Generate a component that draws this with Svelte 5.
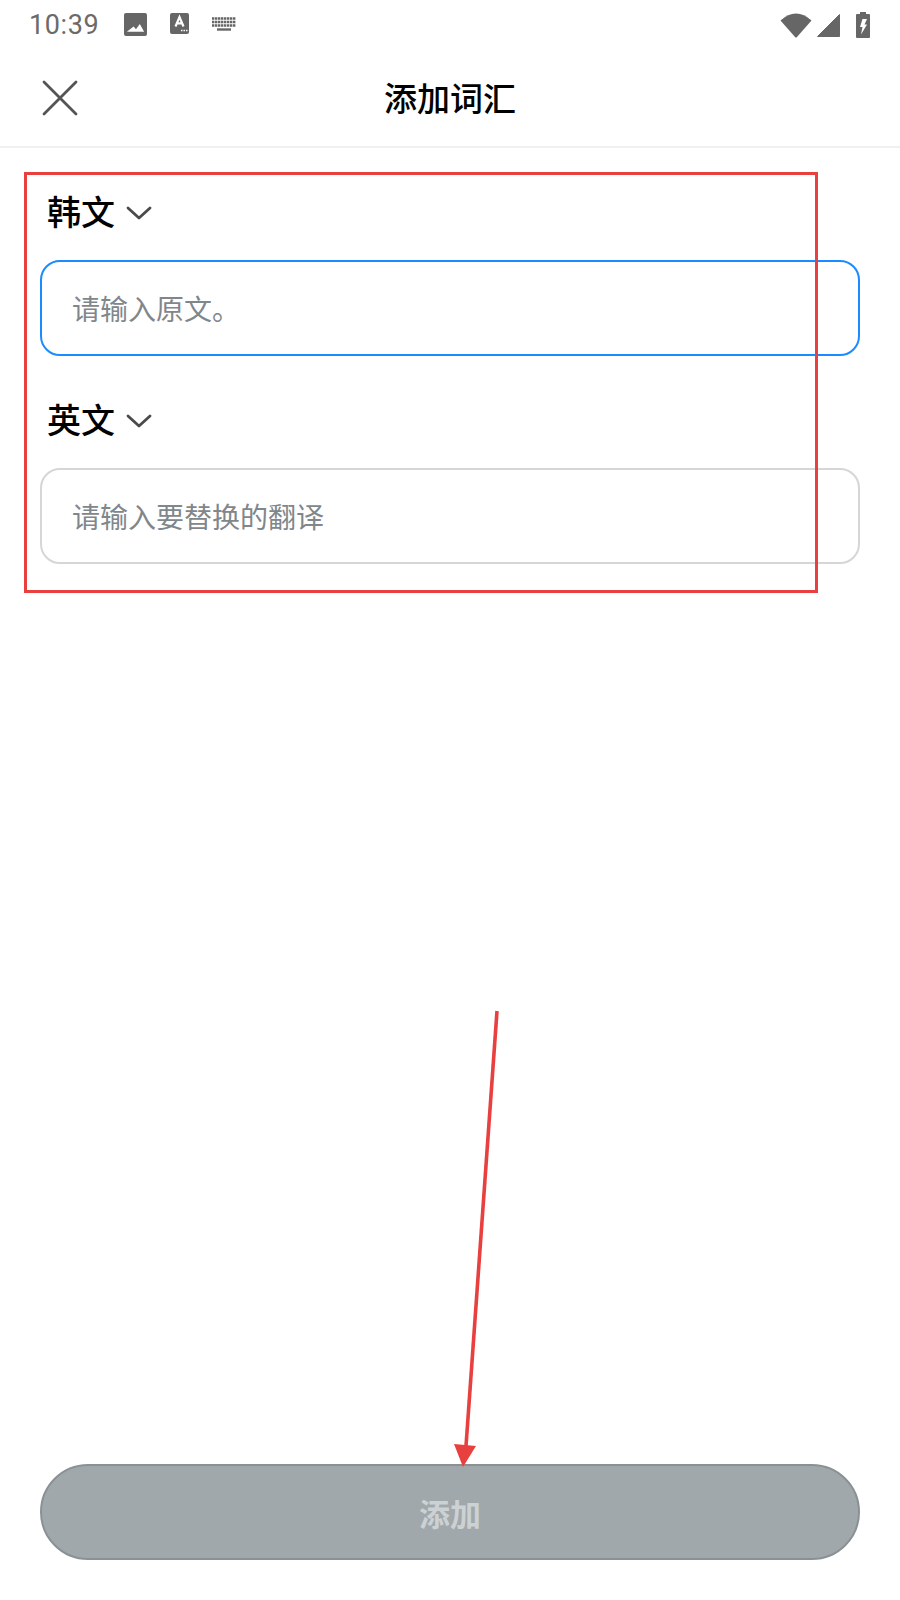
<script lang="ts">
  const fields = [
    { lang: '韩文', placeholder: '请输入原文。', focused: true },
    { lang: '英文', placeholder: '请输入要替换的翻译', focused: false }
  ];
</script>

<div class="page">
  <div class="status">
    <span class="time">10:39</span>
    <svg class="ic-photo" width="23" height="23" viewBox="0 0 24 24">
      <path fill-rule="evenodd" d="M2 0h20a2 2 0 0 1 2 2v20a2 2 0 0 1-2 2H2a2 2 0 0 1-2-2V2a2 2 0 0 1 2-2zM3 19.500h18l-4.500-8-4 5.500-2.500-3z" fill="#666" />
    </svg>
    <svg class="ic-a" width="20" height="22" viewBox="0 0 20 22">
      <rect width="19" height="21" rx="2" fill="#666" />
      <path d="M5.500 13.500 9.500 4 13.500 13.500M7 10.300h5" fill="none" stroke="#fff" stroke-width="2.200" />
      <path d="M11 17.500h1.500M13.500 17.500H15M16 17.500h1.500" stroke="#fff" stroke-width="1.600" />
    </svg>
    <svg class="ic-kb" width="24" height="14" viewBox="0 0 24 14">
      <path d="M0 1.500h24M0 5h24M0 8.500h24" stroke="#666" stroke-width="2.400" stroke-dasharray="2.400 .6" />
      <path d="M5 12.500h14" stroke="#666" stroke-width="2.400" />
    </svg>
    <span class="grow"></span>
    <svg class="ic-wifi" width="32" height="25" viewBox="0 0 32 25">
      <path d="M.5 7.500Q8 .5 16 .5T31.500 7.500L17 24q-1 1-2 0z" fill="#666" />
    </svg>
    <svg class="ic-signal" width="23" height="23" viewBox="0 0 23 23">
      <path d="M22.500.5v22H.5z" fill="#666" stroke="#666" stroke-linejoin="round" />
    </svg>
    <svg class="ic-batt" width="14" height="26" viewBox="0 0 14 26">
      <path d="M4 0h6v2h3a1 1 0 0 1 1 1v22a1 1 0 0 1-1 1H1a1 1 0 0 1-1-1V3a1 1 0 0 1 1-1h3z" fill="#666" />
      <path d="M6.500 7H11L8.500 12.500H11L5 22.500 6.500 15H4z" fill="#fff" />
    </svg>
  </div>

  <header class="top">
    <button class="close" type="button" aria-label="Close">
      <svg width="36" height="36" viewBox="0 0 36 36">
        <path d="M2 2l32 32M34 2L2 34" stroke="#555" stroke-width="2.800" stroke-linecap="round" />
      </svg>
    </button>
    <h1>添加词汇</h1>
  </header>

  <main class="form">
    {#each fields as f}
      <div class="label">
        <span>{f.lang}</span>
        <svg width="26" height="14" viewBox="0 0 26 14">
          <path d="M2 2l11 10L24 2" fill="none" stroke="#4a4a4a" stroke-width="2.800" stroke-linecap="round" stroke-linejoin="round" />
        </svg>
      </div>
      <div class="input" class:focused={f.focused}>{f.placeholder}</div>
    {/each}
  </main>

  <div class="bottom">
    <button class="add" type="button">添加</button>
  </div>

  <!-- annotation drawn over the screenshot -->
  <div class="mark"></div>
  <svg class="arrow" width="900" height="1600" viewBox="0 0 900 1600">
    <path d="M497 1011 466 1446" stroke="#e8403f" stroke-width="3.600" />
    <path d="M454 1444 476 1446 463 1467z" fill="#e8403f" />
  </svg>
</div>

<style>
  :global(body) {
    margin: 0;
    background: #fff;
  }
  .page {
    position: relative;
    width: 900px;
    height: 1600px;
    display: flex;
    flex-direction: column;
    background: #fff;
    font-family: Roboto, "Noto Sans CJK SC", sans-serif;
    overflow: hidden;
  }
  .status {
    height: 48px;
    padding: 2px 30px 0 29px;
    display: flex;
    align-items: center;
    box-sizing: border-box;
    flex: none;
  }
  .time {
    font-size: 27px;
    color: #6a6a6a;
    letter-spacing: 0.6px;
    width: 95px;
  }
  .ic-photo {
    margin-top: -2px;
  }
  .ic-a {
    margin-left: 23px;
    margin-top: -2px;
  }
  .ic-kb {
    margin-left: 22px;
    margin-top: -2px;
  }
  .grow {
    flex: 1;
  }
  .ic-wifi {
    margin-top: 0;
  }
  .ic-signal {
    margin-left: 5px;
    margin-top: 1px;
  }
  .ic-batt {
    margin-left: 16px;
    margin-top: -1px;
  }
  .top {
    position: relative;
    height: 100px;
    flex: none;
    display: flex;
    align-items: center;
    justify-content: center;
    box-sizing: border-box;
    border-bottom: 2px solid #f0f0f0;
  }
  .top h1 {
    margin: 0;
    font-size: 33px;
    font-weight: 500;
    color: #000;
  }
  .close {
    position: absolute;
    left: 42px;
    top: 32px;
    padding: 0;
    width: 36px;
    height: 36px;
    border: 0;
    background: none;
  }
  .form {
    padding: 0 40px;
    flex: 1;
  }
  .label {
    height: 112px;
    box-sizing: border-box;
    padding: 43px 0 0 7px;
    display: flex;
    align-items: flex-start;
    gap: 11px;
    font-size: 34px;
    font-weight: 500;
    line-height: 44px;
    color: #000;
  }
  .label svg {
    margin-top: 15px;
  }
  .input {
    height: 96px;
    box-sizing: border-box;
    border: 2px solid #d6d6d6;
    border-radius: 20px;
    padding: 0 30px;
    display: flex;
    align-items: center;
    font-size: 28px;
    color: #7f878b;
  }
  .input.focused {
    border-color: #1a8cff;
  }
  .bottom {
    padding: 0 40px 40px;
    flex: none;
  }
  .add {
    width: 100%;
    height: 96px;
    border: 2px solid #8a9195;
    border-radius: 48px;
    background: #a1a8ab;
    color: #ccd1d3;
    font-family: inherit;
    font-size: 31px;
    font-weight: 700;
    padding: 0;
  }
  .mark {
    position: absolute;
    left: 24px;
    top: 172px;
    width: 794px;
    height: 421px;
    box-sizing: border-box;
    border: 3px solid #e8403f;
  }
  .arrow {
    position: absolute;
    left: 0;
    top: 0;
    pointer-events: none;
  }
</style>
